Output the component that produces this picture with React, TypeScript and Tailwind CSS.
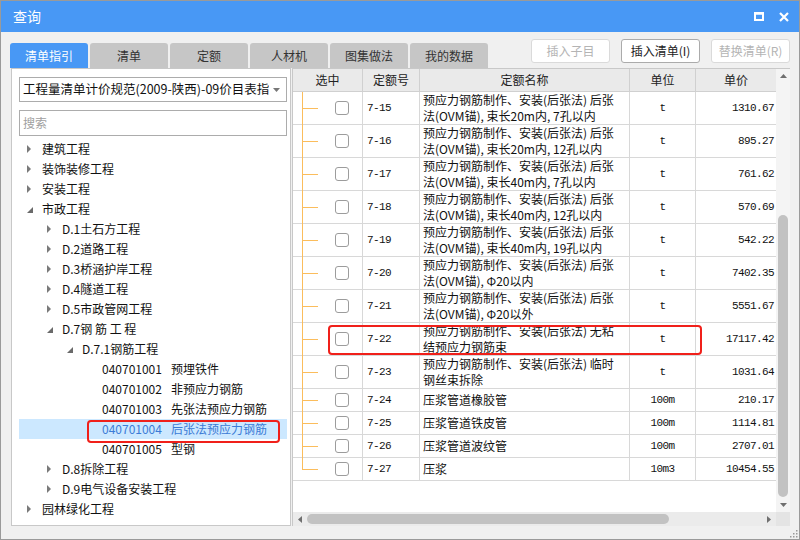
import React from "react";

type TreeItem = {
  level: number;
  label: string;
  code?: string;
  kind: "collapsed" | "expanded" | "leaf";
  selected?: boolean;
};

const tree: TreeItem[] = [
  { level: 0, label: "建筑工程", kind: "collapsed" },
  { level: 0, label: "装饰装修工程", kind: "collapsed" },
  { level: 0, label: "安装工程", kind: "collapsed" },
  { level: 0, label: "市政工程", kind: "expanded" },
  { level: 1, label: "D.1土石方工程", kind: "collapsed" },
  { level: 1, label: "D.2道路工程", kind: "collapsed" },
  { level: 1, label: "D.3桥涵护岸工程", kind: "collapsed" },
  { level: 1, label: "D.4隧道工程", kind: "collapsed" },
  { level: 1, label: "D.5市政管网工程", kind: "collapsed" },
  { level: 1, label: "D.7钢 筋 工 程", kind: "expanded" },
  { level: 2, label: "D.7.1钢筋工程", kind: "expanded" },
  { level: 3, code: "040701001", label: "预埋铁件", kind: "leaf" },
  { level: 3, code: "040701002", label: "非预应力钢筋", kind: "leaf" },
  { level: 3, code: "040701003", label: "先张法预应力钢筋", kind: "leaf" },
  { level: 3, code: "040701004", label: "后张法预应力钢筋", kind: "leaf", selected: true },
  { level: 3, code: "040701005", label: "型钢", kind: "leaf" },
  { level: 1, label: "D.8拆除工程", kind: "collapsed" },
  { level: 1, label: "D.9电气设备安装工程", kind: "collapsed" },
  { level: 0, label: "园林绿化工程", kind: "collapsed" },
];

type QuotaRow = { code: string; l1: string; l2?: string; unit: string; price: string; marked?: boolean };

const head = "预应力钢筋制作、安装(后张法) ";

const rows: QuotaRow[] = [
  { code: "7-15", l1: head + "后张", l2: "法(OVM锚), 束长20m内, 7孔以内", unit: "t", price: "1310.67" },
  { code: "7-16", l1: head + "后张", l2: "法(OVM锚), 束长20m内, 12孔以内", unit: "t", price: "895.27" },
  { code: "7-17", l1: head + "后张", l2: "法(OVM锚), 束长40m内, 7孔以内", unit: "t", price: "761.62" },
  { code: "7-18", l1: head + "后张", l2: "法(OVM锚), 束长40m内, 12孔以内", unit: "t", price: "570.69" },
  { code: "7-19", l1: head + "后张", l2: "法(OVM锚), 束长40m内, 19孔以内", unit: "t", price: "542.22" },
  { code: "7-20", l1: head + "后张", l2: "法(OVM锚), Φ20以内", unit: "t", price: "7402.35" },
  { code: "7-21", l1: head + "后张", l2: "法(OVM锚), Φ20以外", unit: "t", price: "5551.67" },
  { code: "7-22", l1: head + "无粘", l2: "结预应力钢筋束", unit: "t", price: "17117.42", marked: true },
  { code: "7-23", l1: head + "临时", l2: "钢丝束拆除", unit: "t", price: "1031.64" },
  { code: "7-24", l1: "压浆管道橡胶管", unit: "100m", price: "210.17" },
  { code: "7-25", l1: "压浆管道铁皮管", unit: "100m", price: "1114.81" },
  { code: "7-26", l1: "压浆管道波纹管", unit: "100m", price: "2707.01" },
  { code: "7-27", l1: "压浆", unit: "10m3", price: "10454.55" },
];

const tabs = ["清单指引", "清单", "定额", "人材机", "图集做法", "我的数据"];

function Arrow({ kind }: { kind: TreeItem["kind"] }) {
  if (kind === "collapsed")
    return (
      <svg width="5" height="8" viewBox="0 0 5 8">
        <path d="M0 0 L4 4 L0 8 Z" fill="#7a7a7a" />
      </svg>
    );
  if (kind === "expanded")
    return (
      <svg width="7" height="7" viewBox="0 0 7 7" className="mt-[3px]">
        <path d="M6 0 L6 6 L0 6 Z" fill="#6a6a6a" />
      </svg>
    );
  return null;
}

function TreeRow({ item }: { item: TreeItem }) {
  const indent = item.level * 20;
  return (
    <div className={`relative flex h-[20px] items-center ${item.selected ? "bg-[#cce8ff] text-[#3b7bd6]" : "text-[#111]"}`}>
      <div style={{ width: 8 + indent }} />
      <div className="flex w-[15px] items-center">
        <Arrow kind={item.kind} />
      </div>
      {item.code ? (
        <>
          <span>{item.code}</span>
          <span className="ml-[9px]">{item.label}</span>
        </>
      ) : (
        <span className="whitespace-pre">{item.label}</span>
      )}
      {item.selected && (
        <div className="absolute left-[68px] top-[1px] h-[23px] w-[193px] rounded-[4px] border-2 border-[#f0201a]" />
      )}
    </div>
  );
}

function Row({ r, last }: { r: QuotaRow; last: boolean }) {
  return (
    <div
      className={`relative grid grid-cols-[70px_57px_210px_66px_80px] border-b border-[#d8d8d8] ${r.l2 ? "h-[33px]" : "h-[23px]"}`}
    >
      <div className="relative flex items-center border-r border-[#d8d8d8] pl-[42px]">
        <span className={`absolute left-[9px] top-0 w-px bg-[#fbbd5c] ${last ? "h-1/2" : "bottom-[-1px]"}`} />
        <span className="absolute left-[9px] top-1/2 h-px w-[16px] bg-[#fbbd5c]" />
        <span className="h-[14px] w-[14px] rounded-[3px] border border-[#9c9c9c] bg-white" />
      </div>
      <div className="flex items-center border-r border-[#d8d8d8] pl-[4px] font-['Liberation_Mono',monospace] text-[11px] tracking-[-0.6px]">
        {r.code}
      </div>
      <div className="flex flex-col justify-center overflow-hidden whitespace-pre border-r border-[#d8d8d8] pl-[3px] leading-[16px]">
        <span>{r.l1}</span>
        {r.l2 && <span>{r.l2}</span>}
      </div>
      <div className="flex items-center justify-center border-r border-[#d8d8d8] font-['Liberation_Mono',monospace] text-[11px] tracking-[-0.6px]">
        {r.unit}
      </div>
      <div className="flex items-center justify-end pr-[2px] font-['Liberation_Mono',monospace] text-[11px] tracking-[-0.6px]">
        {r.price}
      </div>
      {r.marked && (
        <div className="absolute left-[35px] top-[2px] h-[30px] w-[374px] rounded-[4px] border-2 border-[#f0201a]" />
      )}
    </div>
  );
}

function Tri({ dir }: { dir: "up" | "down" | "left" | "right" }) {
  const d = {
    up: "M0 4 L3.5 0 L7 4 Z",
    down: "M0 0 L7 0 L3.5 4 Z",
    left: "M4 0 L4 7 L0 3.5 Z",
    right: "M0 0 L4 3.5 L0 7 Z",
  }[dir];
  const vertical = dir === "up" || dir === "down";
  return (
    <svg width={vertical ? 7 : 4} height={vertical ? 4 : 7} viewBox={vertical ? "0 0 7 4" : "0 0 4 7"}>
      <path d={d} fill="#6f6f6f" />
    </svg>
  );
}

export default function App() {
  return (
    <div className="flex h-[540px] w-[800px] flex-col border border-[#9a9a9a] bg-[#f0f0f0] font-['Noto_Sans_CJK_SC','Noto_Sans',sans-serif] text-[12px] text-[#111]">
      {/* title bar */}
      <div className="flex h-[31px] items-center bg-[#4898f5] pl-[12px] pr-[10px] text-white">
        <span className="text-[14px]">查询</span>
        <div className="ml-auto flex items-center gap-[15px]">
          <svg width="10" height="9" viewBox="0 0 10 9">
            <rect x="1" y="1.5" width="8" height="6.5" fill="none" stroke="#fff" strokeWidth="2" />
            <rect x="0" y="0" width="10" height="2.5" fill="#fff" />
          </svg>
          <svg width="10" height="10" viewBox="0 0 10 10">
            <path d="M1 1 L9 9 M9 1 L1 9" stroke="#fff" strokeWidth="2.2" />
          </svg>
        </div>
      </div>

      {/* tabs + buttons */}
      <div className="flex h-[36px] pl-[9px] pr-[9px] pt-[7px]">
        <div className="flex gap-[2px] self-end">
          {tabs.map((t, i) => (
            <div
              key={t}
              className={`flex h-[25px] w-[78px] items-center justify-center rounded-t-[3px] ${
                i === 0 ? "bg-[#4898f5] text-white" : "bg-[#c6c6c6] text-[#333]"
              }`}
            >
              {t}
            </div>
          ))}
        </div>
        <div className="ml-auto flex gap-[11px]">
          <div className="flex h-[24px] w-[79px] items-center justify-center rounded-[3px] border border-[#dadada] bg-white text-[#b4b4b4]">
            插入子目
          </div>
          <div className="flex h-[24px] w-[79px] items-center justify-center rounded-[3px] border border-[#ababab] bg-white text-[#222]">
            插入清单(I)
          </div>
          <div className="flex h-[24px] w-[79px] items-center justify-center rounded-[3px] border border-[#dadada] bg-white text-[#b4b4b4]">
            替换清单(R)
          </div>
        </div>
      </div>

      {/* main */}
      <div className="flex h-[458px] pl-[10px] pr-[9px]">
        {/* left panel */}
        <div className="flex w-[280px] flex-col border border-[#c8c8c8] bg-white pl-[7px] pt-[8px]">
          <div className="flex h-[25px] w-[268px] items-center border border-[#acacac] pl-[3px] pr-[6px]">
            <span className="flex-1 overflow-hidden whitespace-nowrap text-[12.5px]">
              工程量清单计价规范(2009-陕西)-09价目表指引
            </span>
            <svg width="7" height="4" viewBox="0 0 7 4" className="ml-[4px] shrink-0">
              <path d="M0 0 L7 0 L3.5 4 Z" fill="#777" />
            </svg>
          </div>
          <div className="mt-[8px] flex h-[26px] w-[268px] items-center border border-[#acacac] pl-[3px] text-[#a0a0a0]">
            搜索
          </div>
          <div className="mt-[3px] w-[268px]">
            {tree.map((t, i) => (
              <TreeRow key={i} item={t} />
            ))}
          </div>
        </div>

        {/* right panel */}
        <div className="ml-[1px] flex flex-1 flex-col border-l border-t border-[#c8c8c8] bg-white">
          <div className="flex h-[443px]">
            <div className="flex w-[483px] flex-col">
              <div className="grid h-[23px] grid-cols-[70px_57px_210px_66px_80px] border-b border-[#d0d0d0] bg-[#eaeaea] text-[#222]">
                {["选中", "定额号", "定额名称", "单位", "单价"].map((h, i) => (
                  <div
                    key={h}
                    className={`flex items-center justify-center ${i < 4 ? "border-r border-[#d0d0d0]" : ""}`}
                  >
                    {h}
                  </div>
                ))}
              </div>
              {rows.map((r, i) => (
                <Row key={r.code} r={r} last={i === rows.length - 1} />
              ))}
            </div>
            <div className="flex w-[14px] flex-col items-center bg-[#f4f4f4]">
              <div className="flex h-[14px] items-center">
                <Tri dir="up" />
              </div>
              <div className="mt-[132px] h-[282px] w-[10px] rounded-full bg-[#c2c2c2]" />
              <div className="mt-auto flex h-[14px] items-center">
                <Tri dir="down" />
              </div>
            </div>
          </div>
          <div className="flex h-[14px]">
            <div className="flex w-[483px] items-center bg-[#ebebeb]">
              <div className="flex w-[14px] justify-center">
                <Tri dir="left" />
              </div>
              <div className="h-[10px] w-[362px] rounded-full bg-[#c2c2c2]" />
              <div className="ml-auto flex w-[14px] justify-center">
                <Tri dir="right" />
              </div>
            </div>
            <div className="w-[14px] bg-[#e4e4e4]" />
          </div>
        </div>
      </div>

      {/* bottom strip */}
      <div className="flex h-[13px] items-end justify-end pb-[1px] pr-[1px]">
        <svg width="9" height="9" viewBox="0 0 9 9">
          <rect x="7" y="1" width="1.5" height="1.5" fill="#9a9a9a" />
          <rect x="4" y="4" width="1.5" height="1.5" fill="#9a9a9a" />
          <rect x="7" y="4" width="1.5" height="1.5" fill="#9a9a9a" />
          <rect x="1" y="7" width="1.5" height="1.5" fill="#9a9a9a" />
          <rect x="4" y="7" width="1.5" height="1.5" fill="#9a9a9a" />
          <rect x="7" y="7" width="1.5" height="1.5" fill="#9a9a9a" />
        </svg>
      </div>
    </div>
  );
}
